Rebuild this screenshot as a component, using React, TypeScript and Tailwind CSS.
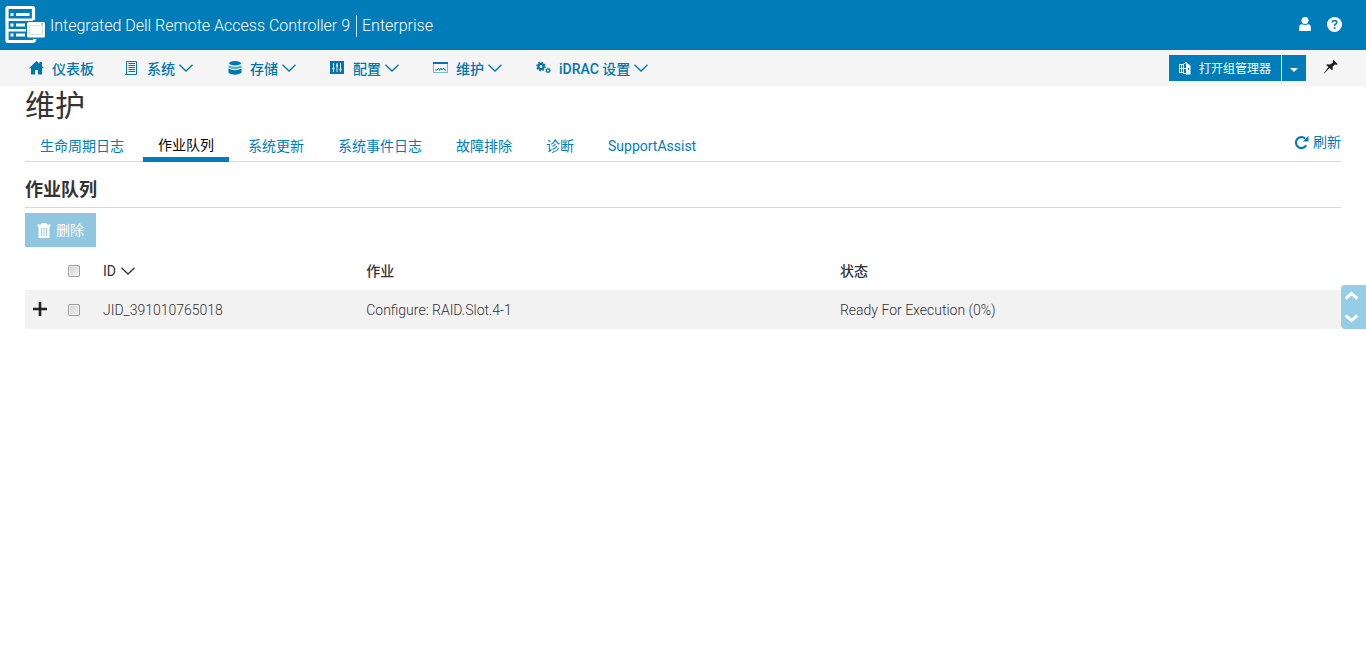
import type { ReactNode } from 'react';

function ServerLogo() {
  return (
    <svg width="41" height="40" viewBox="0 0 41 40" fill="none" aria-hidden="true">
      <path d="M28.500 15V3.500Q28.500 2.500 27.500 2.500H3Q2 2.500 2 3.500V35.500Q2 36.500 3 36.500H28Q29.500 36.500 30 34" stroke="#fff" strokeWidth="3.200" />
      <path d="M5.500 9.500H8.500M11 9.500H24.500M5.500 20H8.500M11 20H20M5.500 30H8.500M11 30H20" stroke="#fff" strokeWidth="3" />
      <path d="M3 14.700H28M3 25.200H21" stroke="#fff" strokeWidth="2.400" />
      <rect x="22" y="17" width="18" height="15.500" rx="1.500" fill="#fff" />
      <path d="M24.500 20.500H37.500V29.500H24.500Z" stroke="#cde4f1" strokeWidth="1" />
      <path d="M36 19h2" stroke="#d05a78" strokeWidth="1" />
    </svg>
  );
}

function HomeIcon() {
  return (
    <svg width="15" height="14" viewBox="0 0 15 14" fill="currentColor" aria-hidden="true">
      <path d="M7.500 0 10.500 2.800V1H13V5.200L15 7.200H13V13.500H9V9H6V13.500H2V7.200H0Z" />
    </svg>
  );
}

function SystemIcon() {
  return (
    <svg width="15" height="14" viewBox="0 0 15 14" fill="none" stroke="currentColor" aria-hidden="true">
      <path d="M2.500 0.500H12.500V13.500H1M2.500 0.500V13.500" />
      <path d="M4.500 2.500H11M4.500 4.500H11M4.500 6.500H11M4.500 8.500H11M4.500 10.500H11" />
    </svg>
  );
}

function StorageIcon() {
  return (
    <svg width="15" height="14" viewBox="0 0 15 14" fill="currentColor" aria-hidden="true">
      <ellipse cx="8" cy="2.200" rx="6" ry="2.200" />
      <path d="M1.500 4.200Q8 7.500 14.500 4.200V6.500Q8 9.800 1.500 6.500Z" opacity="0.600" />
      <path d="M1.500 7.500Q8 10.800 14.500 7.500V12Q8 15.500 1.500 12Z" />
    </svg>
  );
}

function ConfigIcon() {
  return (
    <svg width="15" height="14" viewBox="0 0 15 14" aria-hidden="true">
      <rect width="14" height="13" fill="currentColor" />
      <path d="M3.500 2V11M7 2V11M10.500 2V11" stroke="#fff" strokeWidth="0.900" />
      <path d="M2.500 7.500H4.500M6 4.500H8M9.500 8.500H11.500" stroke="#fff" strokeWidth="1.500" />
    </svg>
  );
}

function MaintenanceIcon() {
  return (
    <svg width="15" height="14" viewBox="0 0 15 14" fill="none" stroke="currentColor" aria-hidden="true">
      <path d="M0.500 1.500H14.500V11.500H0.500Z" opacity="0.500" />
      <path d="M0 2H15" strokeWidth="2" />
      <path d="M2 9H4L5.500 7L6.500 9.500L8 7L9 9L10.500 7L11.500 9H13" strokeWidth="0.900" />
    </svg>
  );
}

function GearsIcon() {
  return (
    <svg width="15" height="14" viewBox="0 0 15 14" fill="none" stroke="currentColor" aria-hidden="true">
      <circle cx="5" cy="5.500" r="2.600" strokeWidth="2.200" />
      <circle cx="5" cy="5.500" r="4" strokeWidth="1.600" strokeDasharray="1.600 1.540" />
      <circle cx="12" cy="9.500" r="1.600" strokeWidth="1.200" />
      <circle cx="12" cy="9.500" r="2.400" strokeWidth="0.800" strokeDasharray="1 0.880" />
    </svg>
  );
}

function Chevron() {
  return (
    <svg className="shrink-0" width="14" height="8" viewBox="0 0 14 8" fill="none" stroke="currentColor" strokeWidth="1.300" aria-hidden="true">
      <path d="M0.500 0.700 7 7 13.500 0.700" />
    </svg>
  );
}

function UserIcon() {
  return (
    <svg width="12" height="14" viewBox="0 0 12 14" fill="currentColor" aria-hidden="true">
      <circle cx="6" cy="3.500" r="3.500" />
      <path d="M0.200 14V10Q0.200 7.300 3 7.300Q6 8.800 9 7.300Q11.800 7.300 11.800 10V14Z" />
    </svg>
  );
}

function HelpIcon() {
  return (
    <svg width="15" height="15" viewBox="0 0 14 14" aria-hidden="true">
      <circle cx="7" cy="7" r="7" fill="#fff" />
      <path d="M4.900 5.200Q5 3.300 7.100 3.300Q9.200 3.400 9.100 5.100Q9 6.200 7.800 6.800Q7 7.200 7 8.500" fill="none" stroke="#007db8" strokeWidth="1.500" />
      <path d="M6.200 9.500H7.900V11.100H6.200Z" fill="#007db8" />
    </svg>
  );
}

function GroupIcon() {
  return (
    <svg width="13" height="13" viewBox="0 0 13 13" fill="none" stroke="#fff" aria-hidden="true">
      <path d="M5 2.500H1.500V10.500H5M1.500 6.500H5M3.500 3V10" strokeWidth="0.900" />
      <path d="M5.500 12V2L8.500 0.500V12.500" />
      <path d="M8 0.500 12.500 3.500V12.500H8Z" fill="#fff" stroke="none" />
      <path d="M5.500 6.500H8M5.500 11.500H9" />
      <path d="M10.500 6V8" stroke="#007db8" />
    </svg>
  );
}

function PinIcon() {
  return (
    <svg width="16" height="16" viewBox="0 0 16 16" fill="currentColor" aria-hidden="true">
      <path d="M10.300 0.800 14.800 5.200 13.600 5.800 12 5.400 9.600 7.800 9.900 10.400 8.900 11 6.500 9 1.200 14.600 0.800 14.200 5.400 8 3.300 6 4.100 5.200 7 5.600 10.100 3.400 9.700 2Z" />
    </svg>
  );
}

function RefreshIcon() {
  return (
    <svg width="15" height="15" viewBox="0 0 15 15" aria-hidden="true">
      <path d="M12.200 10.300A5.500 5.500 0 1 1 11.200 3.500" fill="none" stroke="currentColor" strokeWidth="2.200" />
      <path d="M14.500 0.800V6.500H8.800Z" fill="currentColor" />
    </svg>
  );
}

function TrashIcon() {
  return (
    <svg width="14" height="15" viewBox="0 0 14 15" aria-hidden="true">
      <path d="M0.500 1.500H4.500V0H9.500V1.500H13.500V3.500H0.500ZM1.500 3.500H12.500V15H1.500Z" fill="#fff" />
      <path d="M4.500 5V13M7 5V13M9.500 5V13" stroke="#8fc6e0" strokeWidth="0.900" />
    </svg>
  );
}

const menus: { label: string; icon: ReactNode; opens: boolean }[] = [
  { label: '仪表板', icon: <HomeIcon />, opens: false },
  { label: '系统', icon: <SystemIcon />, opens: true },
  { label: '存储', icon: <StorageIcon />, opens: true },
  { label: '配置', icon: <ConfigIcon />, opens: true },
  { label: '维护', icon: <MaintenanceIcon />, opens: true },
  { label: 'iDRAC 设置', icon: <GearsIcon />, opens: true },
];

const tabs = ['生命周期日志', '作业队列', '系统更新', '系统事件日志', '故障排除', '诊断', 'SupportAssist'];
const activeTab = '作业队列';

const jobs = [{ id: 'JID_391010765018', job: 'Configure: RAID.Slot.4-1', status: 'Ready For Execution (0%)' }];

function CheckBox({ label }: { label: string }) {
  return (
    <input
      type="checkbox"
      aria-label={label}
      className="block size-3 appearance-none rounded-xs border border-[#a0a0a0] bg-linear-to-br from-[#d2d2d2] to-[#f4f4f4] ring-inset ring-1 ring-[#eeeeee] checked:bg-[#007db8]"
    />
  );
}

export default function App() {
  return (
    <div className="min-h-screen bg-white font-['Roboto','Noto_Sans_CJK_SC',sans-serif] text-sm text-[#333333]">
      <header className="flex h-[50px] items-center justify-between bg-[#007db8] pr-6 pl-[5px] text-white">
        <div className="flex items-center gap-1">
          <ServerLogo />
          <div className="flex items-center pt-px text-base font-light">
            <span>Integrated Dell Remote Access Controller 9</span>
            <span className="ml-[6px] border-l border-white/80 pl-[5px] leading-[22px]">Enterprise</span>
          </div>
        </div>
        <div className="flex items-center gap-4 pb-[2px]">
          <button type="button" aria-label="用户"><UserIcon /></button>
          <button type="button" aria-label="帮助"><HelpIcon /></button>
        </div>
      </header>

      <nav className="flex h-9 items-center justify-between bg-[#f5f5f5] pr-[27px] pl-[29px]">
        <ul className="flex items-center gap-[30px]">
          {menus.map((menu) => (
            <li key={menu.label}>
              <a href="#" className="flex items-center font-medium text-[#0076ad]">
                {menu.icon}
                <span className="ml-2 pt-px leading-5">{menu.label}</span>
                {menu.opens && <span className="mx-1"><Chevron /></span>}
              </a>
            </li>
          ))}
        </ul>
        <div className="flex items-center">
          <button type="button" className="flex h-[26px] items-center gap-2 bg-[#007db8] pr-[10px] pl-[9px] text-xs text-white">
            <GroupIcon />
            <span className="pt-[2px]">打开组管理器</span>
          </button>
          <button type="button" aria-label="更多" className="ml-px flex h-[26px] w-6 items-center justify-center bg-[#007db8] pt-1 text-white">
            <svg width="8" height="4" viewBox="0 0 8 4" fill="currentColor" aria-hidden="true"><path d="M0 0H8L4 4Z" /></svg>
          </button>
          <button type="button" aria-label="固定" className="ml-[17px] pb-[2px] text-[#222222]"><PinIcon /></button>
        </div>
      </nav>

      <main className="px-[25px]">
        <h1 className="text-[30px] leading-10 font-normal">维护</h1>
        <div className="flex items-center justify-between border-b border-[#d8d8d8]">
          <ul className="-mb-px flex gap-1">
            {tabs.map((tab) => (
              <li key={tab}>
                <a
                  href="#"
                  className={
                    tab === activeTab
                      ? 'block h-9 border-b-5 border-[#007db8] px-[15px] pt-[9px] leading-5 text-black'
                      : 'block h-9 px-[15px] pt-[10px] leading-5 text-[#007db8]'
                  }
                >
                  {tab}
                </a>
              </li>
            ))}
          </ul>
          <button type="button" className="flex items-center gap-1 pb-[3px] text-[#007db8]">
            <RefreshIcon />
            刷新
          </button>
        </div>

        <section>
          <h2 className="mt-3 border-b border-[#d8d8d8] pt-[3px] pb-1 text-lg leading-[26px] font-bold">作业队列</h2>
          <button type="button" disabled className="mt-[5px] flex h-[34px] items-center gap-[5px] bg-[#8fc6e0] px-3 text-sm text-white">
            <TrashIcon />
            删除
          </button>
          <table className="mt-1 w-full table-fixed text-left">
            <thead>
              <tr className="h-[39px]">
                <th className="w-[43px]" />
                <th className="w-[35px]"><CheckBox label="全选" /></th>
                <th className="w-[20%] font-normal">
                  <button type="button" className="flex items-center gap-[5px]">ID <Chevron /></button>
                </th>
                <th className="w-[36%] font-medium">作业</th>
                <th className="font-medium">状态</th>
              </tr>
            </thead>
            <tbody>
              {jobs.map((row) => (
                <tr key={row.id} className="h-[39px] bg-[#f2f2f2] font-light">
                  <td className="pl-2">
                    <button type="button" aria-label="展开" className="block pb-[2px]">
                      <svg width="14" height="14" viewBox="0 0 14 14" stroke="#222" strokeWidth="2.600" aria-hidden="true"><path d="M7 0V14M0 7H14" /></svg>
                    </button>
                  </td>
                  <td><CheckBox label={row.id} /></td>
                  <td>{row.id}</td>
                  <td>{row.job}</td>
                  <td>{row.status}</td>
                </tr>
              ))}
            </tbody>
          </table>
        </section>
      </main>

      <div className="fixed top-[285px] right-0 flex h-11 w-[25px] flex-col justify-between rounded-l bg-[#95cce6] py-[6px] pr-1 text-white">
        <button type="button" aria-label="向上" className="flex justify-center">
          <svg width="13" height="9" viewBox="0 0 13 9" fill="none" stroke="currentColor" strokeWidth="3" aria-hidden="true"><path d="M0.500 7.500 6.500 2.500 12.500 7.500" /></svg>
        </button>
        <button type="button" aria-label="向下" className="flex justify-center">
          <svg width="13" height="9" viewBox="0 0 13 9" fill="none" stroke="currentColor" strokeWidth="3" aria-hidden="true"><path d="M0.500 1.500 6.500 6.500 12.500 1.500" /></svg>
        </button>
      </div>
    </div>
  );
}
